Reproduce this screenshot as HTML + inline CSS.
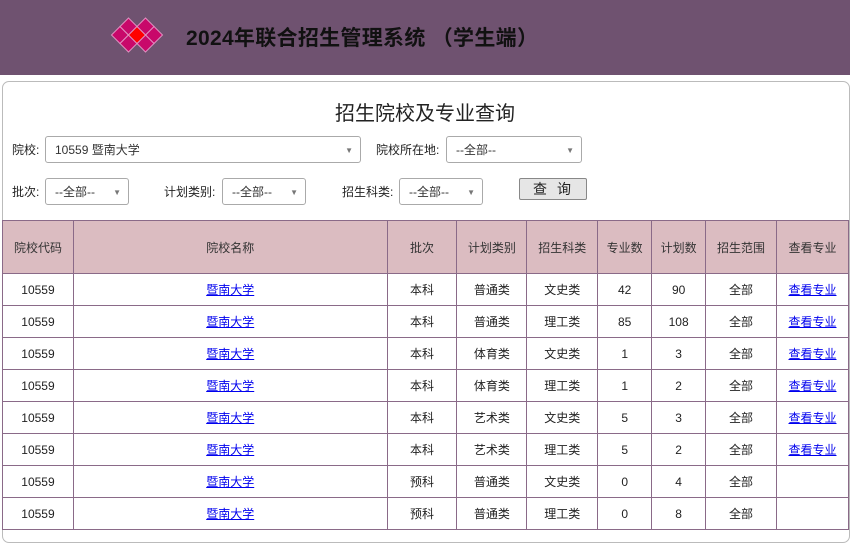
<!DOCTYPE html>
<html><head><meta charset="utf-8"><style>
body{margin:0;width:850px;height:532px;overflow:hidden;background:#fff;font-family:"Liberation Sans","Noto Sans CJK SC",sans-serif;font-size:12px;color:#222}
.top{position:absolute;left:0;top:0;width:850px;height:75px;background:#6f5270}
.title{position:absolute;left:186px;top:22px;font-size:21px;font-weight:bold;color:#111;letter-spacing:0.3px}
.card{position:absolute;left:2px;top:81px;width:846px;height:460px;border:1px solid #bbb;border-radius:7px;background:#fff}
.h2{position:absolute;left:0;width:850px;top:97px;text-align:center;font-size:20px;color:#222}
.lab{position:absolute;font-size:12px}
.sel{position:absolute;height:27px;border:1px solid #aaa;border-radius:3px;background:#fff;box-sizing:border-box;font-size:12px;line-height:27px;padding-left:9px;color:#333}
.sel:after{content:"▼";position:absolute;right:7px;top:0;font-size:8px;color:#777}
.btn{position:absolute;left:519px;top:178px;width:68px;height:22px;box-sizing:border-box;border:1px solid #888;background:#e6e6e6;border-radius:2px;text-align:center;line-height:20px;font-size:14px;letter-spacing:10px;padding-left:8px}
table{position:absolute;left:2px;top:220px;width:847px;border-collapse:collapse;font-size:12px}
td,th{border:1px solid #8a6a88;text-align:center;font-weight:normal;padding:0;height:31px}
th{background:#dbbcc1;height:52px;color:#333}
a{color:#00e;text-decoration:underline}
</style></head><body>
<div class="top"></div>
<svg style="position:absolute;left:0;top:0" width="200" height="75">
<g stroke="#e090c0" stroke-width="1" fill="#c8086a">
<polygon points="120,26.5 128.5,35 120,43.5 111.5,35"/>
<polygon points="154,26.5 162.5,35 154,43.5 145.5,35"/>
<polygon points="128.5,18 137,26.5 128.5,35 120,26.5"/>
<polygon points="145.5,18 154,26.5 145.5,35 137,26.5"/>
<polygon points="128.5,35 137,43.5 128.5,52 120,43.5"/>
<polygon points="145.5,35 154,43.5 145.5,52 137,43.5"/>
<polygon points="137,26.5 145.5,35 137,43.5 128.5,35" fill="#ff0000"/>
</g></svg>
<div class="title">2024年联合招生管理系统 （学生端）</div>
<div class="card"></div>
<div class="h2">招生院校及专业查询</div>
<div class="lab" style="left:12px;top:141px">院校:</div>
<div class="sel" style="left:45px;top:136px;width:316px">10559 暨南大学</div>
<div class="lab" style="left:376px;top:141px">院校所在地:</div>
<div class="sel" style="left:446px;top:136px;width:136px">--全部--</div>
<div class="lab" style="left:12px;top:183px">批次:</div>
<div class="sel" style="left:45px;top:178px;width:84px">--全部--</div>
<div class="lab" style="left:164px;top:183px">计划类别:</div>
<div class="sel" style="left:222px;top:178px;width:84px">--全部--</div>
<div class="lab" style="left:342px;top:183px">招生科类:</div>
<div class="sel" style="left:399px;top:178px;width:84px">--全部--</div>
<div class="btn">查询</div>
<table>
<colgroup><col style="width:71px"><col style="width:314px"><col style="width:70px"><col style="width:70px"><col style="width:71px"><col style="width:54px"><col style="width:54px"><col style="width:71px"><col style="width:72px"></colgroup>
<tr><th>院校代码</th><th>院校名称</th><th>批次</th><th>计划类别</th><th>招生科类</th><th>专业数</th><th>计划数</th><th>招生范围</th><th>查看专业</th></tr>
<tr><td>10559</td><td><a>暨南大学</a></td><td>本科</td><td>普通类</td><td>文史类</td><td>42</td><td>90</td><td>全部</td><td><a>查看专业</a></td></tr>
<tr><td>10559</td><td><a>暨南大学</a></td><td>本科</td><td>普通类</td><td>理工类</td><td>85</td><td>108</td><td>全部</td><td><a>查看专业</a></td></tr>
<tr><td>10559</td><td><a>暨南大学</a></td><td>本科</td><td>体育类</td><td>文史类</td><td>1</td><td>3</td><td>全部</td><td><a>查看专业</a></td></tr>
<tr><td>10559</td><td><a>暨南大学</a></td><td>本科</td><td>体育类</td><td>理工类</td><td>1</td><td>2</td><td>全部</td><td><a>查看专业</a></td></tr>
<tr><td>10559</td><td><a>暨南大学</a></td><td>本科</td><td>艺术类</td><td>文史类</td><td>5</td><td>3</td><td>全部</td><td><a>查看专业</a></td></tr>
<tr><td>10559</td><td><a>暨南大学</a></td><td>本科</td><td>艺术类</td><td>理工类</td><td>5</td><td>2</td><td>全部</td><td><a>查看专业</a></td></tr>
<tr><td>10559</td><td><a>暨南大学</a></td><td>预科</td><td>普通类</td><td>文史类</td><td>0</td><td>4</td><td>全部</td><td></td></tr>
<tr><td>10559</td><td><a>暨南大学</a></td><td>预科</td><td>普通类</td><td>理工类</td><td>0</td><td>8</td><td>全部</td><td></td></tr>
</table>
</body></html>
